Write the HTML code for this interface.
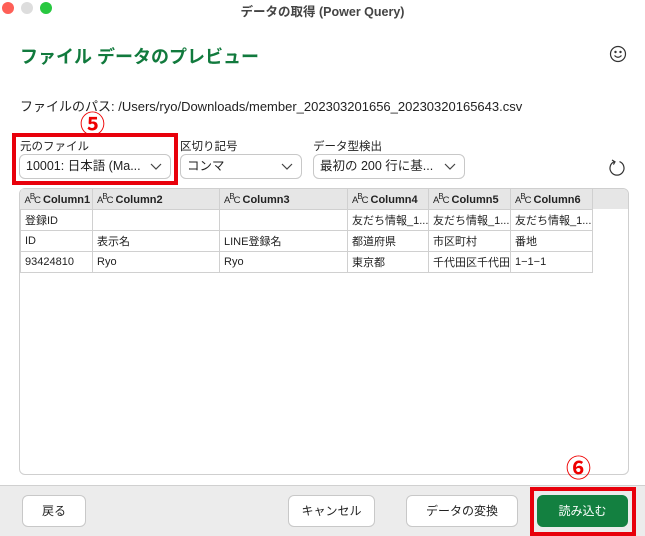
<!DOCTYPE html>
<html><head><meta charset="utf-8"><style>
*{box-sizing:border-box;margin:0;padding:0}
body{width:645px;height:536px;overflow:hidden;background:#fff;font-family:"Liberation Sans","Noto Sans CJK JP",sans-serif;color:#222;position:relative}
.a{position:absolute}
.dot{position:absolute;top:2px;width:12px;height:12px;border-radius:50%}
.dd{position:absolute;top:154px;height:25px;border:1px solid #c8c8c8;border-radius:6px;font-size:12.5px;line-height:23px;padding-left:6px;background:#fff}
.dd svg{position:absolute;right:8px;top:8px}
.lbl{position:absolute;top:138px;font-size:11.5px;color:#222}
table{position:absolute;left:20px;top:189px;border-collapse:collapse;font-size:11px;table-layout:fixed;width:572px}
td{border:1px solid #d0d0d0;height:21px;padding-left:4px;white-space:nowrap;overflow:hidden}
th{background:#e6e6e6;border-right:1px solid #d0d0d0;height:20px;text-align:left;padding-left:4px;font-size:11px;font-weight:bold;white-space:nowrap;overflow:hidden}
.abc{font-weight:normal;font-size:9.5px;letter-spacing:-1px;margin-right:3px}
.btn{position:absolute;top:495px;height:32px;border:1px solid #c8c8c8;border-radius:6px;background:#fff;font-size:12px;text-align:center;line-height:30px}
</style></head><body>
<div class="dot" style="left:2px;background:#fe5f57"></div>
<div class="dot" style="left:21px;background:#ddd"></div>
<div class="dot" style="left:40px;background:#28c840"></div>
<div class="a" style="left:0;width:645px;top:1px;text-align:center;font-size:12.5px;font-weight:bold;color:#444">データの取得 (Power Query)</div>
<div class="a" style="left:20px;top:43px;font-size:18px;font-weight:bold;color:#117a3d">ファイル データのプレビュー</div>
<svg class="a" style="left:609px;top:45px" width="18" height="18" viewBox="0 0 18 18" fill="none" stroke="#333" stroke-width="1.2"><circle cx="9" cy="9" r="7.5"/><circle cx="6.5" cy="7" r=".6" fill="#333"/><circle cx="11.5" cy="7" r=".6" fill="#333"/><path d="M5.5 10.5q3.5 3.5 7 0"/></svg>
<div class="a" style="left:20px;top:96px;font-size:13px;color:#222">ファイルのパス: /Users/ryo/Downloads/member_202303201656_20230320165643.csv</div>
<div class="a" style="left:80px;top:105px;font-size:25px;font-weight:bold;color:#e00">⑤</div>
<div class="lbl" style="left:20px">元のファイル</div>
<div class="lbl" style="left:180px">区切り記号</div>
<div class="lbl" style="left:313px">データ型検出</div>
<div class="dd" style="left:19px;width:152px">10001: 日本語 (Ma...<svg width="12" height="8"><path d="M1 1l5 5 5-5" fill="none" stroke="#444" stroke-width="1.2"/></svg></div>
<div class="dd" style="left:180px;width:122px">コンマ<svg width="12" height="8"><path d="M1 1l5 5 5-5" fill="none" stroke="#444" stroke-width="1.2"/></svg></div>
<div class="dd" style="left:313px;width:152px">最初の 200 行に基...<svg width="12" height="8"><path d="M1 1l5 5 5-5" fill="none" stroke="#444" stroke-width="1.2"/></svg></div>
<div class="a" style="left:12px;top:133px;width:166px;height:52px;border:4px solid #e8000b"></div>
<svg class="a" style="left:607px;top:158px" width="20" height="20" viewBox="0 0 20 20" fill="none" stroke="#333" stroke-width="1.2"><path d="M12.5 3.6A7 7 0 1 1 7.5 3.6"/><path d="M5 2l3 1.8-1.6 2.8"/></svg>
<div class="a" style="left:19px;top:188px;width:610px;height:287px;border:1px solid #cfcfcf;border-radius:6px"></div>
<div class="a" style="left:20px;top:189px;width:608px;height:20px;background:#e6e6e6;border-radius:5px 5px 0 0"></div>
<table>
<tr><th style="width:72px"><span class="abc">A<sup>B</sup>C</span>Column1</th><th style="width:127px"><span class="abc">A<sup>B</sup>C</span>Column2</th><th style="width:128px"><span class="abc">A<sup>B</sup>C</span>Column3</th><th style="width:81px"><span class="abc">A<sup>B</sup>C</span>Column4</th><th style="width:82px"><span class="abc">A<sup>B</sup>C</span>Column5</th><th style="width:82px"><span class="abc">A<sup>B</sup>C</span>Column6</th></tr>
<tr><td>登録ID</td><td></td><td></td><td>友だち情報_1...</td><td>友だち情報_1...</td><td>友だち情報_1...</td></tr>
<tr><td>ID</td><td>表示名</td><td>LINE登録名</td><td>都道府県</td><td>市区町村</td><td>番地</td></tr>
<tr><td>93424810</td><td>Ryo</td><td>Ryo</td><td>東京都</td><td>千代田区千代田</td><td>1−1−1</td></tr>
</table>
<div class="a" style="left:0;top:485px;width:645px;height:51px;background:#ececec;border-top:1px solid #d0d0d0"></div>
<div class="btn" style="left:22px;width:64px">戻る</div>
<div class="btn" style="left:288px;width:87px">キャンセル</div>
<div class="btn" style="left:406px;width:112px">データの変換</div>
<div class="btn" style="left:537px;width:91px;background:#138040;border-color:#138040;color:#fff">読み込む</div>
<div class="a" style="left:566px;top:449px;font-size:25px;font-weight:bold;color:#e00">⑥</div>
<div class="a" style="left:530px;top:487px;width:106px;height:49px;border:4px solid #e8000b"></div>
</body></html>
